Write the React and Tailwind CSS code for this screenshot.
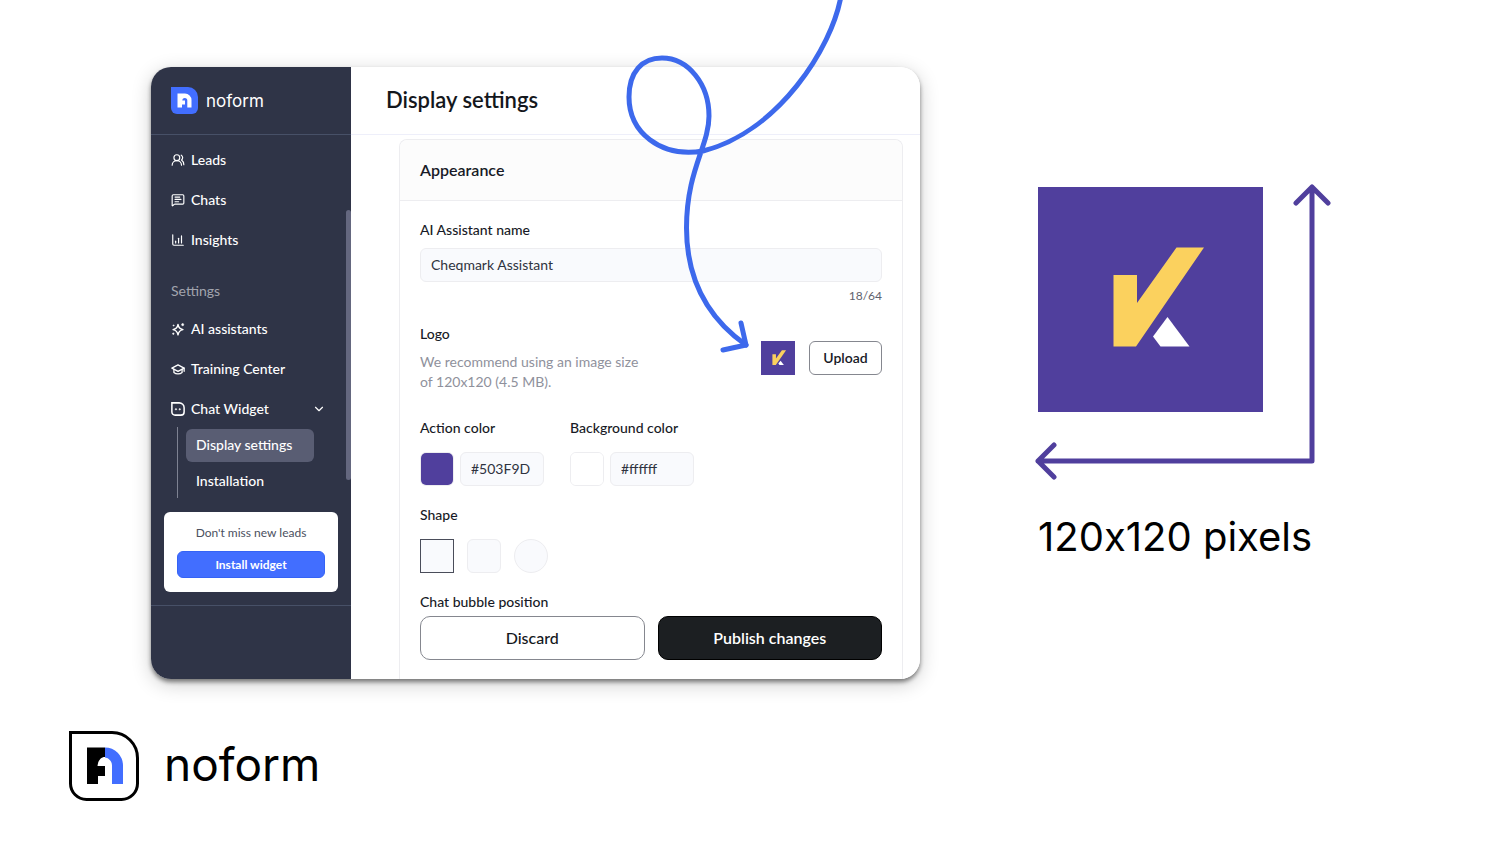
import React, { useState } from "react";
import {
  ChartColumnIncreasing,
  ChevronDown,
  MessageSquareText,
  UsersRound,
} from "lucide-react";

const ACTION_COLOR = "#503F9D";

function SparkIcon(props) {
  return (
    <svg viewBox="0 0 24 24" fill="none" stroke="currentColor" strokeWidth="2.400" strokeLinejoin="round" {...props}>
      <path d="M12 4c.9 5.600 2.900 7.900 8.500 9-5.600 1.200-7.600 3.400-8.500 9-.9-5.600-2.900-7.800-8.500-9 5.600-1.100 7.600-3.400 8.500-9z" />
      <circle cx="20" cy="4.500" r="1.800" fill="currentColor" strokeWidth="1" />
      <circle cx="4.500" cy="6" r="1" fill="currentColor" strokeWidth="1" />
      <circle cx="4" cy="20" r="1.300" fill="currentColor" strokeWidth="1" />
    </svg>
  );
}

function CapIcon(props) {
  return (
    <svg viewBox="0 0 24 24" fill="none" stroke="currentColor" strokeWidth="2.200" strokeLinejoin="round" strokeLinecap="round" {...props}>
      <path d="M12 5 1.500 10.500 12 16l10.500-5.500z" />
      <path d="M5 12.500v5.500c2 1.800 4.300 2.500 7 2.500s5-.7 7-2.500v-5.500M22.500 10.500v5.500" />
    </svg>
  );
}

function WidgetIcon(props) {
  return (
    <svg viewBox="0 0 24 24" fill="none" stroke="currentColor" strokeWidth="2.600" {...props}>
      <path d="M1.500 1.500H14a8.500 8.500 0 0 1 8.500 8.500v7a5.500 5.500 0 0 1-5.500 5.500H7A5.500 5.500 0 0 1 1.500 17z" />
      <circle cx="8.500" cy="12.500" r="1.200" fill="currentColor" strokeWidth="1" />
      <circle cx="15" cy="12.500" r="1.200" fill="currentColor" strokeWidth="1" />
    </svg>
  );
}

function NoformBadge(props) {
  return (
    <svg viewBox="0 0 27 27" {...props}>
      <path d="M0 0h17a10 10 0 0 1 10 10v11a6 6 0 0 1-6 6H6a6 6 0 0 1-6-6z" fill="#426EFF" />
      <path d="M6.500 6.500h7.500a6.500 6.500 0 0 1 6.500 6.500v7.500h-4.200V13.500a2.500 2.500 0 0 0-5 0h2.700v4h-3v3H6.500z" fill="#fff" />
    </svg>
  );
}

function NoformMark(props) {
  return (
    <svg viewBox="0 0 70 70" {...props}>
      <path
        d="M1.500 1.500H43A25.500 25.500 0 0 1 68.500 27v25.500a16 16 0 0 1-16 16h-35a16 16 0 0 1-16-16z"
        fill="#fff"
        stroke="#000"
        strokeWidth="3"
      />
      <path d="M18 16.500h18v9.500c-4 0-7 3.500-7.500 9H36v10h-7v8H18z" fill="#000" />
      <path d="M36 16.500a18 18 0 0 1 18 18V53H43V34.500a8 8 0 0 0-7-8z" fill="#426EFF" />
    </svg>
  );
}

function CheqmarkLogo(props) {
  return (
    <svg viewBox="0 0 225 225" {...props}>
      <rect width="225" height="225" fill="#503F9D" />
      <path d="M75.500 88H99v28l39.500-55.500H166L98 159.500H75.500z" fill="#FBD15E" />
      <path d="M129.500 130 151.500 159.500H122.500L115 149.500z" fill="#fff" />
    </svg>
  );
}

const mainLinks = [
  { label: "Leads", icon: UsersRound },
  { label: "Chats", icon: MessageSquareText },
  { label: "Insights", icon: ChartColumnIncreasing },
];

const settingsLinks = [
  { label: "AI assistants", icon: SparkIcon },
  { label: "Training Center", icon: CapIcon },
];

function NavLink({ label, icon: Icon }) {
  return (
    <a href="#" className="flex h-5 items-center gap-1.5 text-sm leading-5 font-medium text-white">
      <Icon className="size-3.5" />
      {label}
    </a>
  );
}

function Sidebar() {
  return (
    <aside className="flex w-[200px] shrink-0 flex-col bg-[#2F3447]">
      <div className="flex h-[68px] items-center gap-2 border-b border-[#475067] px-5">
        <NoformBadge className="size-[27px]" />
        <span className="font-['Inter'] text-[17px] leading-6 text-white">noform</span>
      </div>

      <div className="flex">
        <nav className="flex-1 pl-5">
          <div className="flex flex-col gap-5 pt-[15px]">
            {mainLinks.map((item) => (
              <NavLink key={item.label} {...item} />
            ))}
          </div>
          <p className="mt-[31px] text-sm leading-5 text-[#A2A4AE]">Settings</p>
          <div className="mt-[18px] flex flex-col gap-5">
            {settingsLinks.map((item) => (
              <NavLink key={item.label} {...item} />
            ))}
            <div className="flex items-center justify-between pr-5">
              <NavLink label="Chat Widget" icon={WidgetIcon} />
              <ChevronDown className="size-3.5 text-white" />
            </div>
          </div>
          <div className="mt-2 ml-1.5 flex h-[71px] flex-col gap-[5px] border-l border-[#7E8292] pt-0.5 pl-2 text-sm font-medium text-white">
            <a href="#" className="flex h-[33px] w-32 items-center rounded-md bg-[#595D73] px-2.5 pb-0.5">
              Display settings
            </a>
            <a href="#" className="flex h-[30px] items-center px-2.5 pb-0.5">
              Installation
            </a>
          </div>
        </nav>
        <div className="mt-[75px] h-[270px] w-[5px] rounded-full bg-[#64677F]" />
      </div>

      <div className="mx-[13px] mt-3.5 rounded-md bg-white px-[13px] pt-[11px] pb-3.5 text-center">
        <p className="text-xs leading-5 text-[#4B5060]">Don't miss new leads</p>
        <button className="mt-2 h-[27px] w-full rounded-md border border-[#3563F5] bg-[#426EFF] text-xs font-bold text-white">
          Install widget
        </button>
      </div>
      <div className="mt-[13px] flex-1 border-t border-[#475067]" />
    </aside>
  );
}

function ColorField({ id, label, value, onChange }) {
  return (
    <div>
      <label htmlFor={id} className="block text-sm leading-5 font-medium">
        {label}
      </label>
      <div className="mt-3.5 flex gap-1.5">
        <input
          type="color"
          aria-label={label + " picker"}
          value={value}
          onChange={(e) => onChange(e.target.value)}
          className="size-[34px] appearance-none overflow-hidden rounded-md border border-[#EDEDF0] [&::-webkit-color-swatch]:border-none [&::-webkit-color-swatch-wrapper]:p-0"
        />
        <input
          id={id}
          type="text"
          value={value}
          onChange={(e) => onChange(e.target.value)}
          className="h-[34px] w-[84px] rounded-md border border-[#EDEDF0] bg-[#F9FAFD] px-2.5 pb-0.5 text-sm text-[#2F3340]"
        />
      </div>
    </div>
  );
}

const shapes = [
  { id: "square", className: "rounded-none" },
  { id: "rounded", className: "rounded-md" },
  { id: "circle", className: "rounded-full" },
];

function DisplaySettings() {
  const [name, setName] = useState("Cheqmark Assistant");
  const [action, setAction] = useState(ACTION_COLOR);
  const [background, setBackground] = useState("#ffffff");
  const [shape, setShape] = useState("square");

  return (
    <main className="flex min-w-0 flex-1 flex-col bg-white text-[#171A26]">
      <header className="flex h-[68px] items-center border-b border-[#EEEFFA] px-[35px] pb-0.5">
        <h1 className="text-[22px] leading-7 font-semibold text-[#14171C]">Display settings</h1>
      </header>

      <section className="mt-1 mr-[17px] ml-12 rounded-t-lg border border-b-0 border-[#EDEDF0]">
        <div className="flex h-[61px] items-center rounded-t-lg border-b border-[#EDEDF0] bg-[#FCFCFC] px-5">
          <h2 className="text-base font-semibold">Appearance</h2>
        </div>

        <div className="px-5 pt-[19px] pb-[19px]">
          <label htmlFor="assistant-name" className="block text-sm leading-5 font-medium">
            AI Assistant name
          </label>
          <input
            id="assistant-name"
            type="text"
            maxLength={64}
            value={name}
            onChange={(e) => setName(e.target.value)}
            className="mt-2 block h-[34px] w-full rounded-md border border-[#EDEDF0] bg-[#F9FAFD] px-2.5 pb-0.5 text-sm text-[#2F3340]"
          />
          <p className="mt-1.5 text-right text-xs leading-4 text-[#5F626E]">{name.length}/64</p>

          {/* Logo */}
          <div className="mt-5 flex items-center">
            <div className="flex-1">
              <h3 className="text-sm leading-5 font-medium">Logo</h3>
              <p className="mt-2 w-56 text-sm leading-5 text-[#8F919C]">
                We recommend using an image size of 120x120 (4.5 MB).
              </p>
            </div>
            <CheqmarkLogo className="mr-3.5 size-[34px]" />
            <button className="h-[34px] w-[73px] rounded-md border border-[#85878F] bg-white text-sm font-semibold">
              Upload
            </button>
          </div>

          {/* Colors */}
          <div className="mt-[26px] flex gap-[26px]">
            <ColorField id="action-color" label="Action color" value={action} onChange={setAction} />
            <ColorField id="background-color" label="Background color" value={background} onChange={setBackground} />
          </div>

          {/* Shape */}
          <fieldset className="mt-[19px]">
            <legend className="text-sm leading-5 font-medium">Shape</legend>
            <div className="mt-3.5 flex gap-[13px]">
              {shapes.map((s) => (
                <input
                  key={s.id}
                  type="radio"
                  name="shape"
                  aria-label={s.id}
                  checked={shape === s.id}
                  onChange={() => setShape(s.id)}
                  className={`size-[34px] appearance-none border border-[#EDEDF0] bg-[#F9FAFD] checked:border-[#4A4D5A] ${s.className}`}
                />
              ))}
            </div>
          </fieldset>

          <h3 className="mt-[19px] text-sm leading-5 font-medium">Chat bubble position</h3>
          <div className="mt-1 grid grid-cols-2 gap-[13px]">
            <button className="h-11 rounded-[10px] border border-[#85878F] bg-white text-base font-medium text-[#14171C]">
              Discard
            </button>
            <button className="h-11 rounded-[10px] border border-black bg-[#1C1F22] text-base font-semibold text-white">
              Publish changes
            </button>
          </div>
        </div>
      </section>
    </main>
  );
}

function App() {
  return (
    <div className="flex min-h-screen flex-col overflow-hidden bg-white font-['Lato','Open_Sans',sans-serif]">
      <div className="flex gap-[114px] pt-[67px] pr-[168px] pl-[151px]">
        <div className="relative flex-1">
          <div className="flex overflow-hidden rounded-[20px] shadow-[0_3px_4px_rgba(0,0,0,0.45),0_5px_20px_rgba(0,0,0,0.2)]">
            <Sidebar />
            <DisplaySettings />
          </div>

          {/* Looping arrow that lands on the logo preview */}
          <svg
            viewBox="620 0 240 360"
            className="pointer-events-none absolute -top-[67px] right-[60px] h-[360px] w-60"
            fill="none"
            stroke="#3D69EC"
            strokeWidth="5"
            strokeLinecap="round"
            strokeLinejoin="round"
          >
            <path d="M841-4C832 48 778 132 703 151 660 158 629 132 629 97 629 72 642 58 662 58 688 58 709 84 709 116 709 146 686.500 170 686.500 228 686.500 285 712 321 746 345" />
            <path d="M741 323l5 22-23 5" />
          </svg>
        </div>

        <figure className="w-[298px] shrink-0 pt-[115px]">
          <svg viewBox="0 0 298 300" className="h-[300px] w-full" fill="none">
            <CheqmarkLogo x="4" y="5" width="225" height="225" />
            <path
              d="M278 5v274H4M262 21l16-16 16 16M20 263 4 279l16 16"
              stroke="#503F9D"
              strokeWidth="5"
              strokeLinecap="round"
              strokeLinejoin="round"
            />
          </svg>
          <figcaption className="mt-7 pl-1 font-['Inter'] text-[40px] leading-[54px] whitespace-nowrap text-black [font-feature-settings:'calt'_0]">
            120x120 pixels
          </figcaption>
        </figure>
      </div>

      <footer className="mt-[52px] flex items-center gap-[25px] pl-[69px] text-black">
        <NoformMark className="size-[70px]" />
        <span className="pb-1 font-['Inter'] text-[46px] leading-[64px]">noform</span>
      </footer>
    </div>
  );
}

export default App;
